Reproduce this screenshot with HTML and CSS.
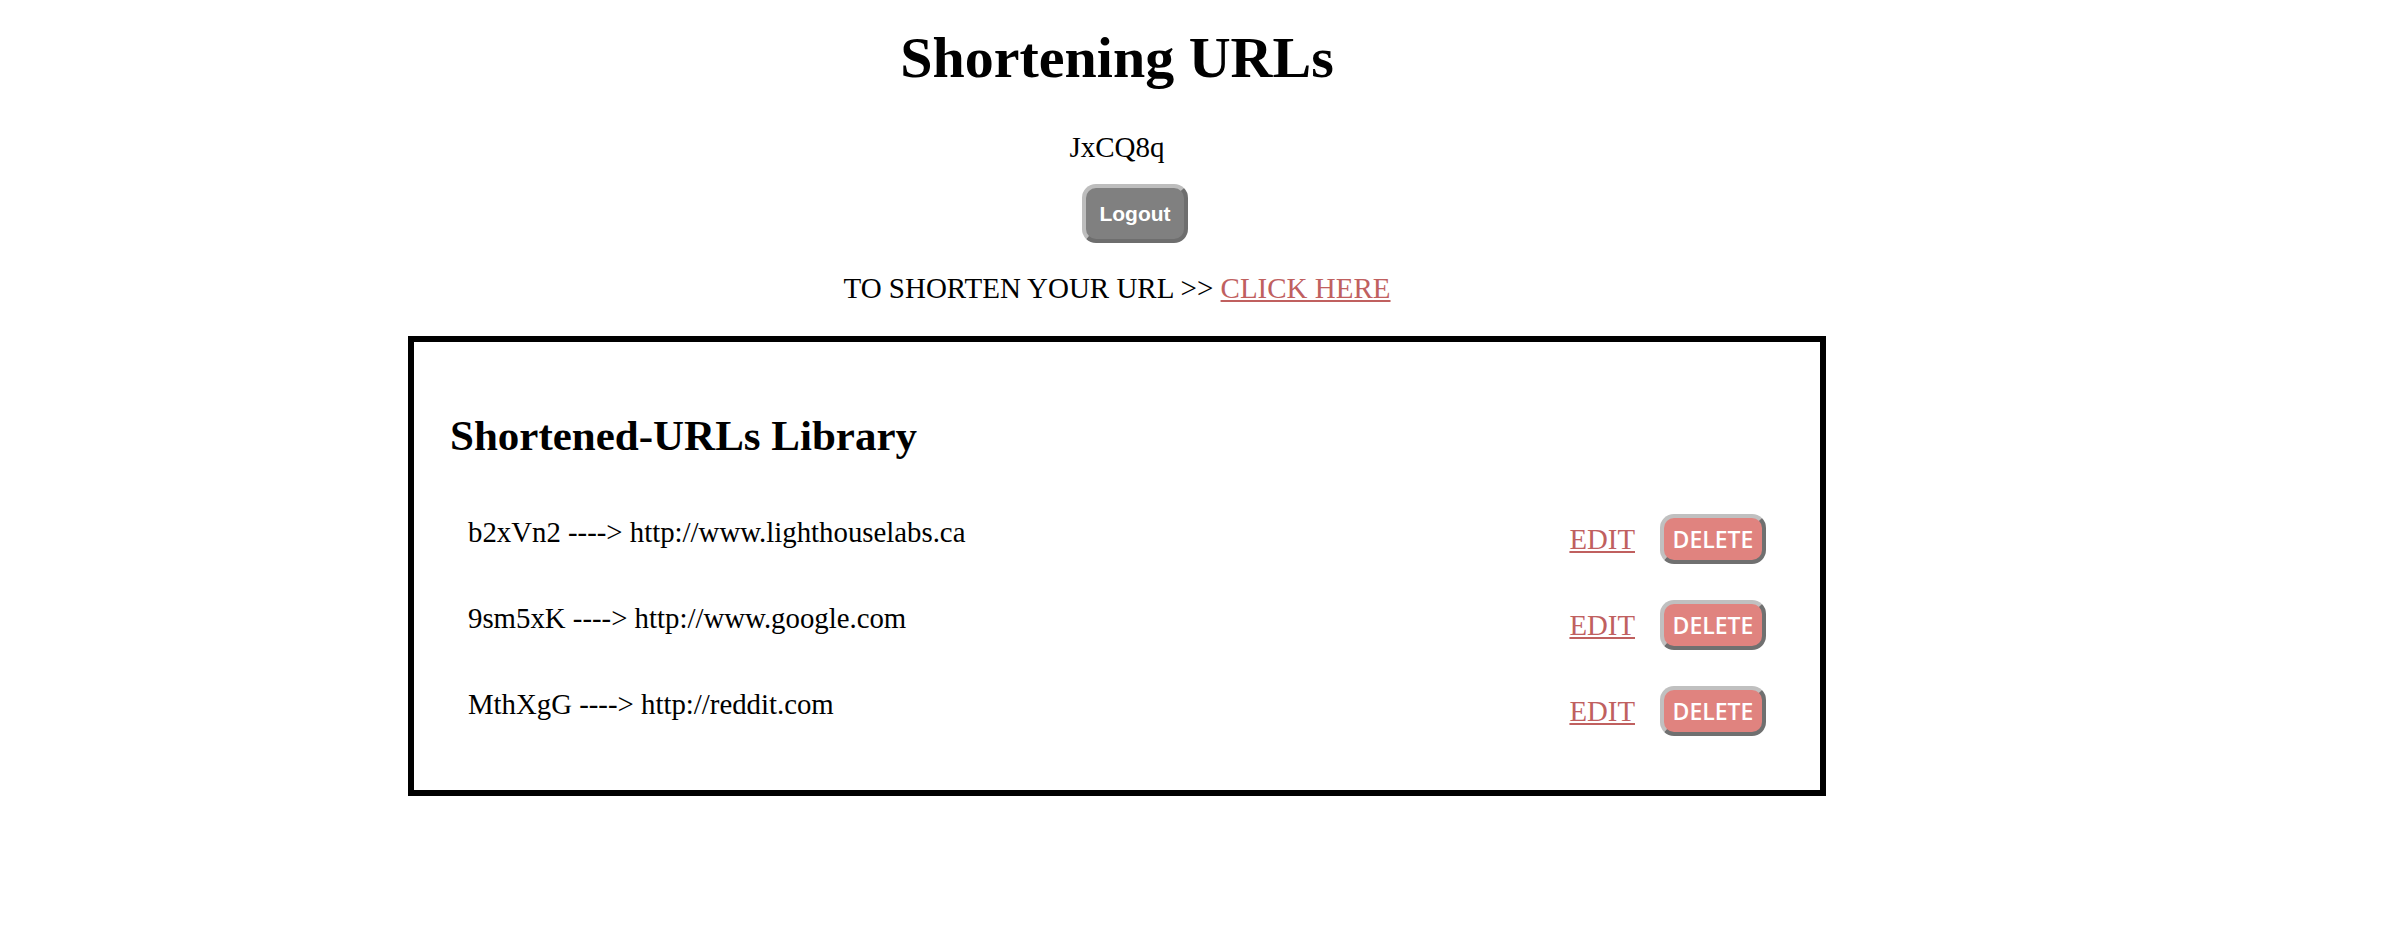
FILE: index.html
```html
<!DOCTYPE html>
<html lang="en">
<head>
<meta charset="utf-8">
<title>Shortening URLs</title>
<link rel="stylesheet" href="styles.css">
</head>
<body>
<main class="page">
  <h1 class="title">Shortening URLs</h1>
  <p class="user">JxCQ8q</p>
  <button class="logout" type="button">Logout</button>
  <p class="cta">TO SHORTEN YOUR URL &gt;&gt; <a class="link" href="#">CLICK HERE</a></p>
  <section class="library">
    <h2 class="library-title">Shortened-URLs Library</h2>
    <ul class="urls">
      <li class="url-row">
        <span class="pair">b2xVn2 ----&gt; http://www.lighthouselabs.ca</span>
        <div class="actions"><a class="link" href="#">EDIT</a><button class="delete" type="button">DELETE</button></div>
      </li>
      <li class="url-row">
        <span class="pair">9sm5xK ----&gt; http://www.google.com</span>
        <div class="actions"><a class="link" href="#">EDIT</a><button class="delete" type="button">DELETE</button></div>
      </li>
      <li class="url-row">
        <span class="pair">MthXgG ----&gt; http://reddit.com</span>
        <div class="actions"><a class="link" href="#">EDIT</a><button class="delete" type="button">DELETE</button></div>
      </li>
    </ul>
  </section>
</main>
</body>
</html>
```
FILE: styles.css
```css
html, body {
  background: #ffffff;
}
body {
  margin: 0;
  font-family: "Liberation Serif", "Times New Roman", serif;
  font-size: 28.8px;
  color: #000000;
}
.page {
  width: 1418px;
  margin-left: 408px;
  display: flex;
  flex-direction: column;
  align-items: center;
}
.title {
  margin: 25px 0 0;
  font-size: 58px;
  font-weight: bold;
  line-height: 66px;
}
.user {
  margin: 40px 0 0;
  font-size: 29px;
  line-height: 33px;
}
.logout {
  margin-top: 20px;
  margin-left: 36px;
  width: 106px;
  height: 59px;
  padding: 0;
  background: #808080;
  color: #ffffff;
  border: 4px solid;
  border-color: #bdbdbd #6e6e6e #6e6e6e #bdbdbd;
  border-radius: 14px;
  font-family: "Liberation Sans", Arial, sans-serif;
  font-weight: bold;
  font-size: 21px;
}
.cta {
  margin: 29px 0 0;
  font-size: 29px;
  line-height: 33px;
}
.link {
  color: #c0605f;
  text-decoration: underline;
}
.library {
  align-self: stretch;
  margin-top: 31px;
  border: 6px solid #000000;
  padding: 69px 54px 54px 36px;
}
.library-title {
  margin: 0;
  font-size: 43px;
  font-weight: bold;
  line-height: 49px;
}
.urls {
  list-style: none;
  margin: 54px 0 0;
  padding: 0 0 0 18px;
  display: flex;
  flex-direction: column;
  gap: 36px;
}
.url-row {
  height: 50px;
  display: flex;
  align-items: center;
  justify-content: space-between;
}
.pair {
  line-height: 33px;
  padding-bottom: 14px;
}
.actions {
  display: flex;
  align-items: center;
  gap: 25px;
  line-height: 33px;
}
.delete {
  width: 106px;
  height: 50px;
  padding: 0;
  background: #e0837f;
  color: #ffffff;
  border: 4px solid;
  border-color: #c0c0c0 #707070 #707070 #c0c0c0;
  border-radius: 14px;
  font-family: "Open Sans", "Liberation Sans", sans-serif;
  font-weight: 600;
  font-size: 23px;
}
```
